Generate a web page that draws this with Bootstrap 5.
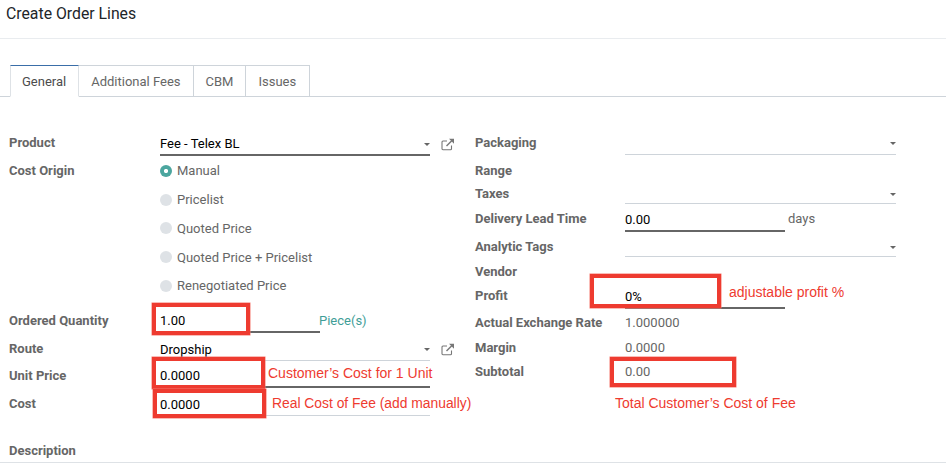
<!DOCTYPE html>
<html lang="en">
<head>
<meta charset="utf-8">
<title>Create Order Lines</title>
<link href="https://cdn.jsdelivr.net/npm/bootstrap@5.3.0/dist/css/bootstrap.min.css" rel="stylesheet">
<style>
html,body{height:464px;overflow:hidden;background:#fff}
body{font-family:Roboto,"Liberation Sans",sans-serif;font-size:13px;color:#666;position:relative}
.titlebar{height:39px;border-bottom:1px solid #e9ecef;padding:4px 0 0 6px;font-size:15.8px;line-height:20px;color:#212529}
.tabzone{margin-top:26px;padding-left:10px;border-bottom:1px solid #ced4da!important;height:32px}
.tabzone .nav-link{height:32px;padding:0 12px;line-height:32px;font-size:13px;color:#666;border:1px solid #ced4da;border-left-width:0;border-radius:0;margin:0;background:#fff}
.tabzone .nav-item:first-child .nav-link{border-left-width:1px;padding-left:11px}
.tabzone .nav-item:last-child .nav-link{padding-right:13px}
.tabzone .nav-link.active{color:#4c4c4c;border-top-color:#3a6ea8;border-bottom-color:#fff}
.sheet{padding-top:32px;width:946px}
.leftcol{width:466px;padding-left:9px}
.rightcol{width:480px;padding-left:9px}
.frow{display:flex;align-items:flex-end}
.flab{width:151px;flex:none;font-weight:700;line-height:22px;color:#666;padding-bottom:1px}
.rightcol .flab{width:150px}
.flab.upper{padding-bottom:2px}
.flab.lower{padding-bottom:0;margin-bottom:-1px}
.fval{line-height:22px;color:#666;height:23px}
.fin{display:flex;align-items:center;height:23px}
.form-control.uline{border:0;border-bottom:1px solid #ced4da;border-radius:0;padding:0;height:23px;font-size:13px;line-height:21px;color:#000;background:transparent;box-shadow:none;font-family:inherit}
.form-control.uline.dark{border-bottom:2px solid #666}
.w270{width:270px}.w271{width:271px}.w160{width:160px}
.caretmark{width:0;height:0;border-left:3px solid transparent;border-right:3px solid transparent;border-top:3px solid #666;margin-left:-6px;flex:none;position:relative}
.caretmark.sunk{margin-top:4px}
.extlink{margin-left:11px;flex:none}
.h27{height:27px}.h26{height:26px}.h21{height:21px}.h28{height:28px}.h25{height:25px}.h24{height:24px}.h33{height:33px}
.radios{height:144px;margin-left:151px;padding-top:.5px}
.radioline{height:28.8px;display:flex;align-items:center;margin:0;padding:0;min-height:0}
.radioline .form-check-input{float:none;width:12px;height:12px;margin:0 5px 0 0;border:0;background-color:#dee2e6;flex:none}
.radioline .form-check-input:checked{background-color:#4ca69f;background-image:radial-gradient(circle,#fff 1.8px,#4ca69f 2.4px)}
.radioline .form-check-label{color:#666;opacity:1}
.costlab{position:absolute;left:9px;top:160px;font-weight:700;line-height:22px}
.teal{color:#3f9e97;margin-left:-1px;line-height:22px;padding-bottom:1px}
.dayslab{margin-left:3px;line-height:22px;padding-bottom:2px}
.descrow{height:47px;padding-left:9px;font-weight:700;line-height:22px;border-bottom:1px solid #dee2e6;display:flex;align-items:flex-end}
.redbox{position:absolute;border:4px solid #ee3b30;box-shadow:0 0 0 .5px #f4786f;pointer-events:none}
.rednote{position:absolute;font-family:"Liberation Sans",Arial,sans-serif;font-size:14px;line-height:16px;color:#ee3b30;white-space:nowrap}
.rb1{left:152px;top:303px;width:98px;height:32px}
.rb2{left:152px;top:357px;width:113px;height:32px}
.rb3{left:153px;top:389px;width:113px;height:29px}
.rb4{left:590px;top:274px;width:131px;height:34px}
.rb5{left:610px;top:357px;width:126px;height:30px}
.rn1{left:268px;top:365px}
.rn2{left:272px;top:395px;font-size:13.85px}
.rn3{left:729px;top:284px}
.rn4{left:615px;top:395px}
</style>
</head>
<body>
<div class="titlebar">Create Order Lines</div>

<ul class="nav nav-tabs tabzone">
  <li class="nav-item"><a class="nav-link active" href="#">General</a></li>
  <li class="nav-item"><a class="nav-link" href="#">Additional Fees</a></li>
  <li class="nav-item"><a class="nav-link" href="#">CBM</a></li>
  <li class="nav-item"><a class="nav-link" href="#">Issues</a></li>
</ul>

<div class="sheet d-flex">
  <div class="leftcol">
    <div class="frow h27">
      <div class="flab upper">Product</div>
      <div class="fin"><input class="form-control uline dark w270" value="Fee - Telex BL"><span class="caretmark"></span>
        <svg class="extlink" width="14" height="13" viewBox="0 0 14 13" fill="none"><path d="M10.5 7.5v3.2a1 1 0 0 1-1 1H2a1 1 0 0 1-1-1V4a1 1 0 0 1 1-1h4" stroke="#777" stroke-width="1.1"/><path d="M5.5 8 11 2.5" stroke="#777" stroke-width="1.5"/><path d="M8 .8h5v5z" fill="#777"/></svg>
      </div>
    </div>
    <div class="radios">
      <div class="form-check radioline"><input class="form-check-input" type="radio" name="co" checked><label class="form-check-label">Manual</label></div>
      <div class="form-check radioline"><input class="form-check-input" type="radio" name="co"><label class="form-check-label">Pricelist</label></div>
      <div class="form-check radioline"><input class="form-check-input" type="radio" name="co"><label class="form-check-label">Quoted Price</label></div>
      <div class="form-check radioline"><input class="form-check-input" type="radio" name="co"><label class="form-check-label">Quoted Price + Pricelist</label></div>
      <div class="form-check radioline"><input class="form-check-input" type="radio" name="co"><label class="form-check-label">Renegotiated Price</label></div>
    </div>
    <div class="frow h33">
      <div class="flab">Ordered Quantity</div>
      <input class="form-control uline dark w160" value="1.00"><span class="teal">Piece(s)</span>
    </div>
    <div class="frow h28">
      <div class="flab">Route</div>
      <div class="fin"><input class="form-control uline w270" value="Dropship"><span class="caretmark"></span>
        <svg class="extlink" width="14" height="13" viewBox="0 0 14 13" fill="none"><path d="M10.5 7.5v3.2a1 1 0 0 1-1 1H2a1 1 0 0 1-1-1V4a1 1 0 0 1 1-1h4" stroke="#777" stroke-width="1.1"/><path d="M5.5 8 11 2.5" stroke="#777" stroke-width="1.5"/><path d="M8 .8h5v5z" fill="#777"/></svg>
      </div>
    </div>
    <div class="frow h27">
      <div class="flab">Unit Price</div>
      <input class="form-control uline dark w270" value="0.0000">
    </div>
    <div class="frow h28">
      <div class="flab">Cost</div>
      <input class="form-control uline w270" value="0.0000">
    </div>
  </div>

  <div class="rightcol">
    <div class="frow h26">
      <div class="flab">Packaging</div>
      <div class="fin"><input class="form-control uline w271" value=""><span class="caretmark"></span></div>
    </div>
    <div class="frow h28"><div class="flab">Range</div></div>
    <div class="frow h21">
      <div class="flab lower">Taxes</div>
      <div class="fin"><input class="form-control uline w271" value=""><span class="caretmark sunk"></span></div>
    </div>
    <div class="frow h28">
      <div class="flab upper">Delivery Lead Time</div>
      <input class="form-control uline dark w160" value="0.00"><span class="dayslab">days</span>
    </div>
    <div class="frow h25">
      <div class="flab lower">Analytic Tags</div>
      <div class="fin"><input class="form-control uline w271" value=""><span class="caretmark sunk"></span></div>
    </div>
    <div class="frow h27"><div class="flab">Vendor</div></div>
    <div class="frow h25">
      <div class="flab upper">Profit</div>
      <input class="form-control uline dark w160" value="0%">
    </div>
    <div class="frow h26"><div class="flab">Actual Exchange Rate</div><div class="fval">1.000000</div></div>
    <div class="frow h25"><div class="flab">Margin</div><div class="fval">0.0000</div></div>
    <div class="frow h24"><div class="flab">Subtotal</div><div class="fval">0.00</div></div>
  </div>
</div>

<div class="descrow"><span>Description</span></div>

<div class="costlab">Cost Origin</div>

<div class="redbox rb1"></div>
<div class="redbox rb2"></div>
<div class="redbox rb3"></div>
<div class="redbox rb4"></div>
<div class="redbox rb5"></div>
<div class="rednote rn1">Customer’s Cost for 1 Unit</div>
<div class="rednote rn2">Real Cost of Fee (add manually)</div>
<div class="rednote rn3">adjustable profit %</div>
<div class="rednote rn4">Total Customer’s Cost of Fee</div>

<script src="https://cdn.jsdelivr.net/npm/bootstrap@5.3.0/dist/js/bootstrap.bundle.min.js"></script>
</body>
</html>
